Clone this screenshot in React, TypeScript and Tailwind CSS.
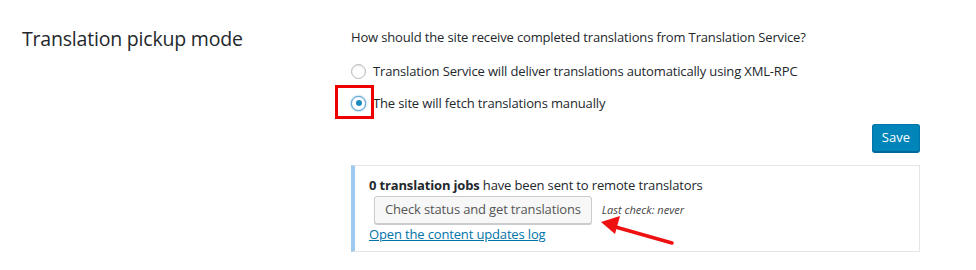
import React from "react";

export default function App() {
  const font = { fontFamily: '"Open Sans", "Noto Sans", sans-serif' };
  return (
    <div className="relative w-[976px] h-[270px] bg-white text-[#23282d] overflow-hidden" style={font}>
      <div className="flex">
        <div className="w-[351px] shrink-0 pl-[22px] pt-[26px]">
          <h2 className="text-[19.5px] leading-[26px] font-normal tracking-[-0.2px]">Translation pickup mode</h2>
        </div>
        <div className="w-[569px] pt-[28px]">
          <p className="text-[13px] leading-[18px] tracking-[-0.15px]">How should the site receive completed translations from Translation Service?</p>
          <div className="mt-[15px] flex items-center gap-[7px] h-[20px]">
            <span className="w-[15px] h-[15px] rounded-full border border-[#b4b9be] bg-white shadow-[inset_0_1px_2px_rgba(0,0,0,0.1)]" />
            <span className="text-[13px] leading-[18px] tracking-[-0.15px]">Translation Service will deliver translations automatically using XML-RPC</span>
          </div>
          <div className="mt-[12px] flex items-center gap-[7px] h-[20px]">
            <span className="w-[15px] h-[15px] rounded-full border border-[#5b9dd9] bg-white shadow-[0_0_2px_rgba(30,140,190,0.8)] flex items-center justify-center">
              <span className="w-[6px] h-[6px] rounded-full bg-[#1e8cbe]" />
            </span>
            <span className="text-[13px] leading-[18px] tracking-[-0.15px]">The site will fetch translations manually</span>
          </div>
          <div className="mt-[11px] flex justify-end">
            <button className="h-[28px] px-[9px] rounded-[3px] bg-[#0085ba] border border-[#0073aa] border-b-[#006799] shadow-[0_1px_0_#006799] text-white text-[13px]">Save</button>
          </div>
          <div className="mt-[13px] border border-[#e5e5e5] border-l-[4px] border-l-[#9dcaee] pl-[14px] pt-[10px] pb-[8px] h-[87px]">
            <p className="text-[13px] leading-[18px] tracking-[-0.15px]"><b>0 translation jobs</b> have been sent to remote translators</p>
            <div className="flex items-center gap-[10px] mt-[2px] ml-[5px]">
              <button className="h-[28px] px-[10px] rounded-[3px] bg-[#f7f7f7] border border-[#cccccc] shadow-[0_1px_0_#cccccc] text-[13px] text-[#555] tracking-[-0.15px]">Check status and get translations</button>
              <i className="text-[11px] text-[#444]">Last check: never</i>
            </div>
            <a className="block text-[13px] leading-[18px] text-[#0073aa] underline mt-[1px] tracking-[-0.15px]">Open the content updates log</a>
          </div>
        </div>
      </div>
      <div className="absolute left-[335px] top-[85px] w-[39px] h-[34px] border-[3px] border-[#ee0000]" />
      <svg className="absolute left-0 top-0" width="976" height="270">
        <line x1="672" y1="243" x2="612" y2="226" stroke="#ee1111" strokeWidth="3.5" strokeLinecap="round" />
        <polygon points="601,222 620,216 615,234" fill="#ee1111" />
      </svg>
    </div>
  );
}
